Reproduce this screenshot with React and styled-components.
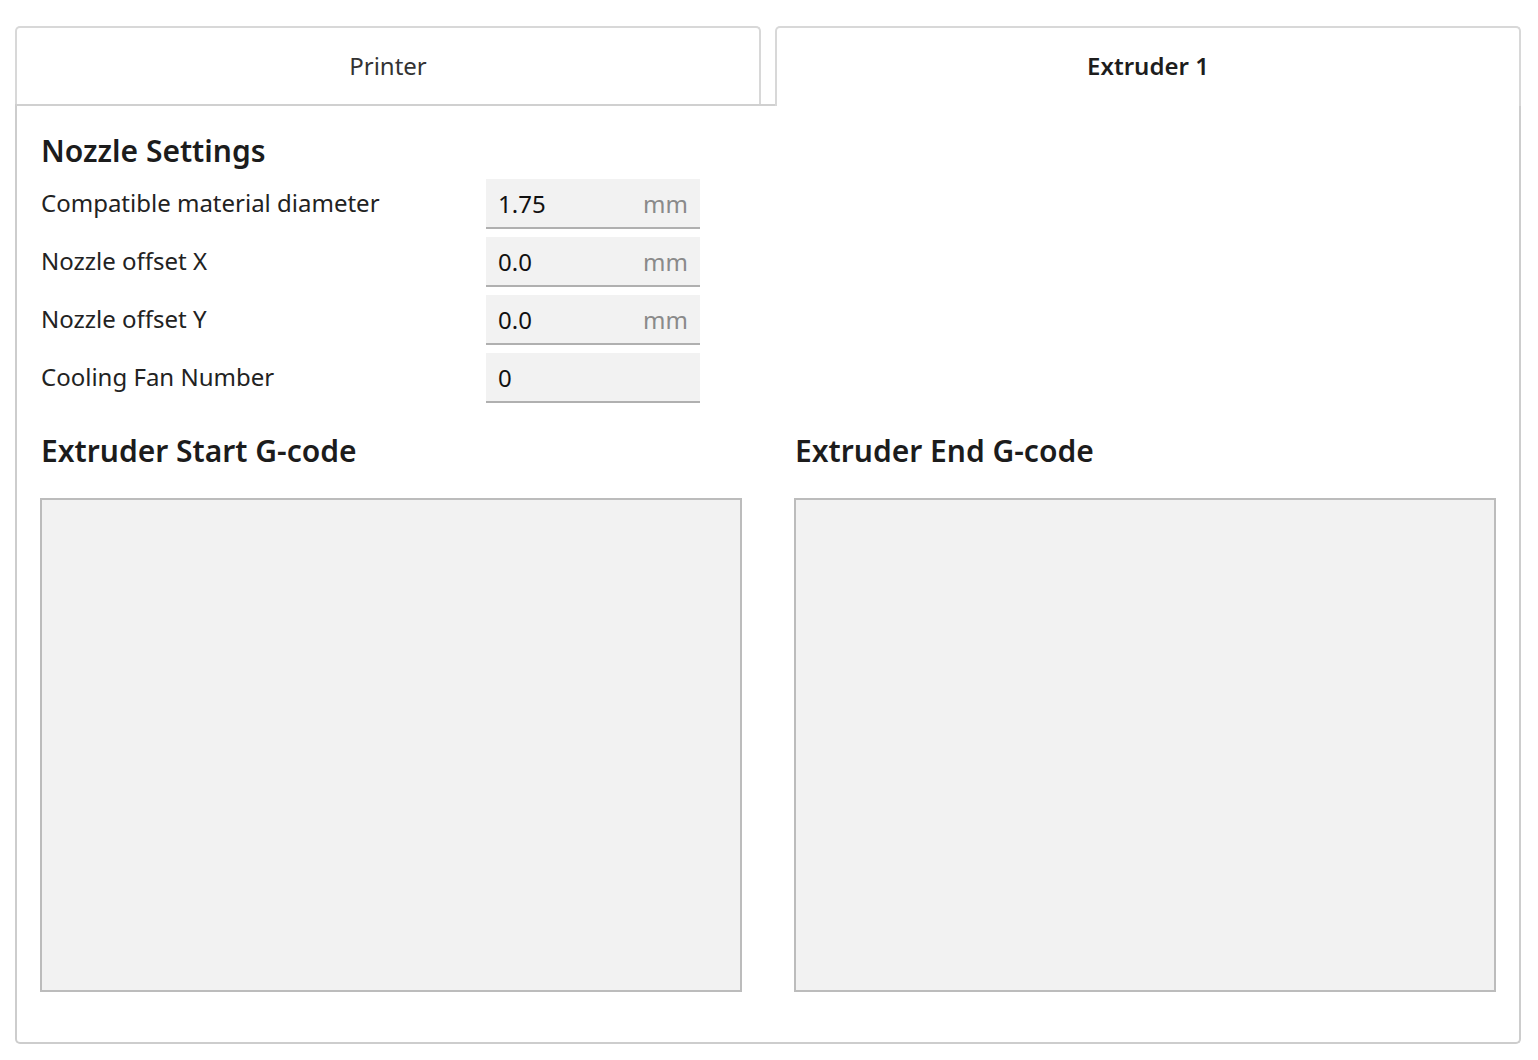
import React from "react";
import styled, { createGlobalStyle } from "styled-components";

const Global = createGlobalStyle`
  html, body { margin: 0; padding: 0; background: #fff; }
  body { font-family: "Noto Sans", "Open Sans", sans-serif; color: #1f1f1f; }
  * { box-sizing: border-box; }
`;

const Page = styled.div`
  padding: 26px 17px 14px 15px;
  width: 1538px;
`;

const TabBar = styled.div`
  display: flex;
  align-items: flex-end;
  gap: 14px;
`;

const Tab = styled.div`
  flex: 1;
  height: ${(p) => (p.$active ? "80px" : "78px")};
  display: flex;
  align-items: center;
  justify-content: center;
  font-size: 24px;
  font-weight: ${(p) => (p.$active ? 600 : 400)};
  color: ${(p) => (p.$active ? "#1d1d1d" : "#333")};
  background: #fff;
  border: 2px solid #d8d8d8;
  border-bottom: none;
  border-radius: 5px 5px 0 0;
  position: relative;
  z-index: ${(p) => (p.$active ? 1 : 0)};
  margin-bottom: ${(p) => (p.$active ? "-2px" : "0")};
  padding-bottom: ${(p) => (p.$active ? "4px" : "2px")};
`;

const Panel = styled.div`
  border: 2px solid #cdcdcd;
  border-top: 2px solid #d0d0d0;
  border-radius: 0 0 5px 5px;
  padding: 25px 23px 50px 23px;
`;

const Heading = styled.h2`
  margin: 0;
  font-size: 30px;
  line-height: 40px;
  font-weight: 600;
  color: #1c1c1c;
  padding-left: 1px;
`;

const Rows = styled.div`
  margin-top: 8px;
  display: flex;
  flex-direction: column;
  gap: 8px;
`;

const Row = styled.div`
  display: flex;
  align-items: center;
  height: 50px;
`;

const Label = styled.div`
  width: 446px;
  padding-left: 1px;
  padding-bottom: 4px;
  font-size: 24px;
  color: #222;
`;

const Field = styled.div`
  width: 214px;
  height: 50px;
  background: #f2f2f2;
  border-bottom: 2px solid #b0b0b0;
  display: flex;
  align-items: center;
  justify-content: space-between;
  padding: 0 12px;
  font-size: 24px;
`;

const Value = styled.span`
  color: #111;
`;

const Unit = styled.span`
  color: #8a8a8a;
`;

const CodeGrid = styled.div`
  margin-top: 28px;
  display: grid;
  grid-template-columns: 1fr 1fr;
  column-gap: 52px;
`;

const CodeColumn = styled.div`
  display: flex;
  flex-direction: column;
  gap: 27px;
`;

const CodeArea = styled.div`
  height: 494px;
  background: #f2f2f2;
  border: 2px solid #bcbcbc;
`;

const fields = [
  { label: "Compatible material diameter", value: "1.75", unit: "mm" },
  { label: "Nozzle offset X", value: "0.0", unit: "mm" },
  { label: "Nozzle offset Y", value: "0.0", unit: "mm" },
  { label: "Cooling Fan Number", value: "0", unit: "" },
];

export default function App() {
  return (
    <Page>
      <Global />
      <TabBar>
        <Tab>Printer</Tab>
        <Tab $active>Extruder 1</Tab>
      </TabBar>
      <Panel>
        <Heading>Nozzle Settings</Heading>
        <Rows>
          {fields.map((f) => (
            <Row key={f.label}>
              <Label>{f.label}</Label>
              <Field>
                <Value>{f.value}</Value>
                <Unit>{f.unit}</Unit>
              </Field>
            </Row>
          ))}
        </Rows>
        <CodeGrid>
          <CodeColumn>
            <Heading>Extruder Start G-code</Heading>
            <CodeArea />
          </CodeColumn>
          <CodeColumn>
            <Heading>Extruder End G-code</Heading>
            <CodeArea />
          </CodeColumn>
        </CodeGrid>
      </Panel>
    </Page>
  );
}
